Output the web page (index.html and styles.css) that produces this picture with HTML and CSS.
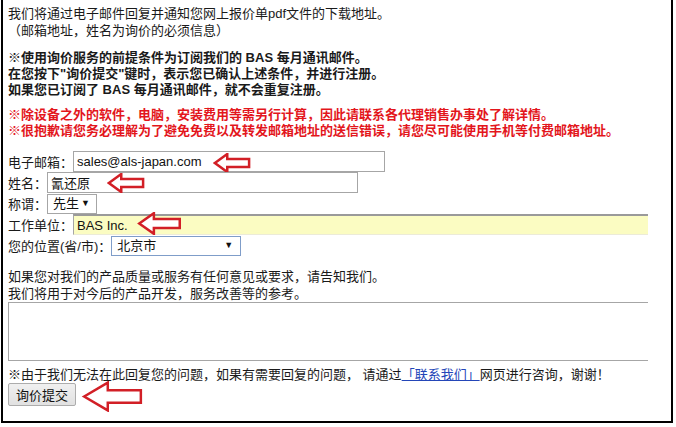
FILE: index.html
```html
<!DOCTYPE html>
<html lang="zh-CN">
<head>
  <meta charset="UTF-8" />
  <title>询价</title>
  <link rel="stylesheet" href="styles.css">
</head>
<body>

<div class="frame">
  <p class="intro">我们将通过电子邮件回复并通知您网上报价单pdf文件的下载地址。<br>（邮箱地址，姓名为询价的必须信息）</p>

  <p class="terms">※使用询价服务的前提条件为订阅我们的 BAS 每月通讯邮件。<br>在您按下"询价提交"键时，表示您已确认上述条件，并进行注册。<br>如果您已订阅了 BAS 每月通讯邮件，就不会重复注册。</p>

  <p class="warn">※除设备之外的软件，电脑，安装费用等需另行计算，因此请联系各代理销售办事处了解详情。<br>※很抱歉请您务必理解为了避免免费以及转发邮箱地址的送信错误，请您尽可能使用手机等付费邮箱地址。</p>

  <form class="form">
    <div class="row">
      <label for="email">电子邮箱：</label>
      <input class="field email" id="email" type="text" value="sales@als-japan.com">
      <svg class="arrow arrow-email" viewBox="0 0 40 20" preserveAspectRatio="none"><polygon points="2,10 15,1 15,6 38,6 38,14 15,14 15,19" vector-effect="non-scaling-stroke"/></svg>
    </div>
    <div class="row">
      <label for="name">姓名：</label>
      <input class="field name" id="name" type="text" value="氰还原">
      <svg class="arrow arrow-name" viewBox="0 0 40 20" preserveAspectRatio="none"><polygon points="2,10 15,1 15,6 38,6 38,14 15,14 15,19" vector-effect="non-scaling-stroke"/></svg>
    </div>
    <div class="row">
      <label for="title">称谓：</label>
      <span class="pick pick-title">
        <select id="title"><option>先生</option><option>女士</option></select>
      </span>
    </div>
    <div class="row">
      <label for="company">工作单位：</label>
      <input class="field company" id="company" type="text" value="BAS Inc.">
      <svg class="arrow arrow-company" viewBox="0 0 40 20" preserveAspectRatio="none"><polygon points="2,10 15,1 15,6 38,6 38,14 15,14 15,19" vector-effect="non-scaling-stroke"/></svg>
    </div>
    <div class="row">
      <label for="city">您的位置(省/市)：</label>
      <span class="pick pick-city">
        <select id="city"><option>北京市</option><option>上海市</option></select>
      </span>
    </div>

    <p class="ask">如果您对我们的产品质量或服务有任何意见或要求，请告知我们。<br>我们将用于对今后的产品开发，服务改善等的参考。</p>
    <textarea class="comment"></textarea>

    <p class="note">※由于我们无法在此回复您的问题，如果有需要回复的问题， 请通过<a href="#">「联系我们」</a>网页进行咨询，谢谢！</p>

    <div class="submit-row">
      <button type="button" class="btn">询价提交</button>
      <svg class="arrow arrow-btn" viewBox="0 0 40 20" preserveAspectRatio="none"><polygon points="2,10 17,1 17,6 38,6 38,14 17,14 17,19" vector-effect="non-scaling-stroke"/></svg>
    </div>
  </form>
</div>

</body>
</html>
```

FILE: styles.css
```css
* {
  box-sizing: border-box;
}

body {
  margin: 0;
  font-family: "Liberation Sans", "Noto Sans CJK SC", sans-serif;
  font-size: 13px;
  color: #1a1a1a;
  background: #fff;
}

.frame {
  margin-left: 1px;
  width: 672px;
  border: 2px solid #000;
  border-top: none;
  padding: 5px 0 14px 5px;
}

p {
  margin: 0;
}

.intro {
  line-height: 17px;
}

.terms {
  margin-top: 11px;
  line-height: 16px;
  font-weight: bold;
}

.warn {
  margin-top: 9px;
  line-height: 16px;
  font-weight: bold;
  color: #e3161c;
}

.form {
  margin-top: 12px;
}

.row {
  position: relative;
  display: flex;
  align-items: center;
  height: 21px;
}

.row label {
  white-space: nowrap;
}

.field {
  height: 21px;
  padding: 0 3px;
  border: 1px solid #a6a6a6;
  font-family: "Liberation Sans", "Noto Sans CJK SC", sans-serif;
  font-size: 13px;
  color: #111;
  background: #fff;
  outline: none;
}

.email {
  width: 312px;
}

.name {
  width: 311px;
}

.company {
  width: 575px;
  border-top: 2px solid #9a9a9a;
  border-right: none;
  border-bottom: 1px solid #ecebd8;
  background: #fbfcc2;
}

.pick {
  position: relative;
  display: inline-block;
  height: 20px;
  border: 1px solid #a6a6a6;
  background: #fff;
}

.pick select {
  appearance: none;
  -webkit-appearance: none;
  height: 18px;
  border: none;
  padding: 0 0 0 5px;
  background: transparent;
  font-family: "Liberation Sans", "Noto Sans CJK SC", sans-serif;
  font-size: 13px;
  color: #111;
  outline: none;
}

.pick::after {
  content: "▼";
  position: absolute;
  top: 3px;
  font-size: 9px;
  color: #111;
  pointer-events: none;
}

.pick-title {
  width: 50px;
}

.pick-title select {
  width: 48px;
}

.pick-title::after {
  right: 6px;
}

.pick-city {
  width: 130px;
  border-color: #7f9dc9;
}

.pick-city select {
  width: 128px;
}

.pick-city::after {
  right: 7px;
}

.arrow {
  position: absolute;
  fill: #fff;
  stroke: #d21f26;
  stroke-width: 2.5px;
  stroke-linejoin: miter;
}

.arrow-email {
  left: 205px;
  top: 2px;
  width: 38px;
  height: 20px;
}

.arrow-name {
  left: 99px;
  top: 1px;
  width: 38px;
  height: 20px;
}

.arrow-company {
  left: 129px;
  top: -2px;
  width: 45px;
  height: 23px;
}

.ask {
  margin-top: 12px;
  line-height: 17px;
}

.comment {
  display: block;
  width: 640px;
  height: 59px;
  border: 1px solid #a6a6a6;
  border-right: none;
  resize: none;
  outline: none;
}

.note {
  margin-top: 6px;
  line-height: 16px;
}

.note a {
  color: #2446b8;
  text-decoration: underline;
}

.submit-row {
  position: relative;
  height: 24px;
}

.btn {
  height: 23px;
  padding: 0 7px;
  border: 1px solid #acacac;
  border-radius: 2px;
  background: linear-gradient(#f0f0f0, #e1e1e1);
  font-family: "Liberation Sans", "Noto Sans CJK SC", sans-serif;
  font-size: 13px;
  color: #111;
  cursor: pointer;
}

.arrow-btn {
  left: 73px;
  top: -2px;
  width: 63px;
  height: 31px;
}
```
